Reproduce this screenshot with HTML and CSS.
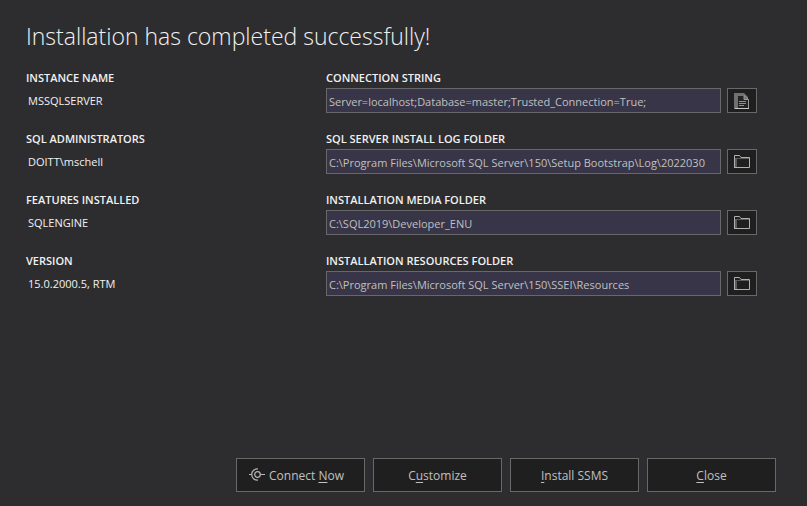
FILE: index.html
```html
<!DOCTYPE html>
<html lang="en">
<head>
<meta charset="utf-8">
<title>Installation complete</title>
<link rel="stylesheet" href="styles.css">
</head>
<body>
<svg class="symbols" aria-hidden="true">
  <symbol id="folder" viewBox="0 0 16 14">
    <path d="M1 3h15v1H3v8H1z" fill="#5c5c5c"/>
    <path d="M0.500 13V0.500H5.500L7 2.500H15.500V12.500H0.500" fill="none" stroke="#b0b0b0"/>
  </symbol>
</svg>
<main class="page">
  <h1 class="title">Installation has completed successfully!</h1>
  <div class="details">
    <dl class="facts">
      <div class="row"><dt class="label">INSTANCE NAME</dt><dd class="value">MSSQLSERVER</dd></div>
      <div class="row"><dt class="label">SQL ADMINISTRATORS</dt><dd class="value">DOITT\mschell</dd></div>
      <div class="row"><dt class="label">FEATURES INSTALLED</dt><dd class="value">SQLENGINE</dd></div>
      <div class="row"><dt class="label">VERSION</dt><dd class="value">15.0.2000.5, RTM</dd></div>
    </dl>
    <div class="paths">
      <div class="row">
        <label class="label" for="conn">CONNECTION STRING</label>
        <div class="field">
          <input class="box" id="conn" type="text" readonly value="Server=localhost;Database=master;Trusted_Connection=True;">
          <button class="icon-button" type="button" aria-label="Copy">
            <svg class="icon page-icon" viewBox="0 0 16 18">
              <path d="M0 1H10V4H5V17H0z" fill="#707070"/>
              <path d="M10 1l4 4v3h-5V4H5V1z" fill="#707070"/>
              <path d="M4 4h6v4h4v9H4z" fill="#242424"/>
              <path d="M10 3.500v4h4.500v9M10 3.500l4.500 4" fill="none" stroke="#9a9a9a"/>
              <path d="M5 9.500h7M5 11.500h7M5 13.500h5" stroke="#909090"/>
              <path d="M1 16.500h14" stroke="#c8c8c8"/>
            </svg>
          </button>
        </div>
      </div>
      <div class="row">
        <label class="label" for="log">SQL SERVER INSTALL LOG FOLDER</label>
        <div class="field">
          <input class="box" id="log" type="text" readonly value="C:\Program Files\Microsoft SQL Server\150\Setup Bootstrap\Log\2022030">
          <button class="icon-button" type="button" aria-label="Open folder"><svg class="icon"><use href="#folder"/></svg></button>
        </div>
      </div>
      <div class="row">
        <label class="label" for="media">INSTALLATION MEDIA FOLDER</label>
        <div class="field">
          <input class="box" id="media" type="text" readonly value="C:\SQL2019\Developer_ENU">
          <button class="icon-button" type="button" aria-label="Open folder"><svg class="icon"><use href="#folder"/></svg></button>
        </div>
      </div>
      <div class="row">
        <label class="label" for="res">INSTALLATION RESOURCES FOLDER</label>
        <div class="field">
          <input class="box" id="res" type="text" readonly value="C:\Program Files\Microsoft SQL Server\150\SSEI\Resources">
          <button class="icon-button" type="button" aria-label="Open folder"><svg class="icon"><use href="#folder"/></svg></button>
        </div>
      </div>
    </div>
  </div>
  <footer class="actions">
    <button class="action with-icon" type="button">
      <svg class="connect" viewBox="0 0 16 14">
        <g fill="none" stroke="#b8b8b8">
          <circle cx="8.500" cy="6.500" r="2.800" stroke-width="1.200"/>
          <path d="M9 1A5.550 5.550 0 1 0 9 12" stroke-width="1.200"/>
          <path d="M0 6.500h3M11.500 6.500h4.500"/>
        </g>
      </svg>
      <span>Connect <u>N</u>ow</span>
    </button>
    <button class="action" type="button"><span>C<u>u</u>stomize</span></button>
    <button class="action" type="button"><span><u>I</u>nstall SSMS</span></button>
    <button class="action" type="button"><span><u>C</u>lose</span></button>
  </footer>
</main>
</body>
</html>
```
FILE: styles.css
```css
* { box-sizing: border-box; }

body {
  margin: 0;
  background: #2d2d30;
  color: #f1f1f1;
  font-family: "Open Sans", "Noto Sans", sans-serif;
  font-size: 12px;
}

.symbols { position: absolute; width: 0; height: 0; }

.page {
  display: flex;
  flex-direction: column;
  min-height: 100vh;
  padding: 20px 31px 14px 26px;
}

.title {
  margin: 0 0 18px;
  font-size: 23px;
  font-weight: 300;
  line-height: 32px;
}

.details {
  display: grid;
  grid-template-columns: 300px minmax(0, 1fr);
  padding-right: 19px;
}

.facts { margin: 0; }

.row {
  display: flex;
  flex-direction: column;
  gap: 2px;
  padding-bottom: 18px;
}

.label {
  font-size: 11px;
  font-weight: 600;
  line-height: 16px;
}

.value {
  margin: 0;
  padding-left: 2px;
  font-size: 11px;
  line-height: 25px;
}

.field { display: flex; gap: 6px; }

.box {
  flex: 1;
  min-width: 0;
  height: 25px;
  padding: 2px 0 0 2px;
  border: 1px solid #686868;
  border-radius: 0;
  background: #373547;
  color: #c0c0c0;
  font-family: inherit;
  font-size: 11px;
  outline: none;
}

.icon-button,
.action {
  display: flex;
  align-items: center;
  justify-content: center;
  border: 1px solid #686868;
  background: #1f1f1f;
  color: #c0c0c0;
  font: inherit;
}

.icon-button { width: 30px; height: 25px; padding: 0; }

.icon { width: 16px; height: 14px; }

.page-icon { height: 18px; }

.actions {
  display: flex;
  justify-content: flex-end;
  gap: 8px;
  margin-top: auto;
}

.action { width: 129px; height: 34px; padding: 0 12px; gap: 4px; }

.with-icon { justify-content: flex-start; }

.connect { width: 16px; height: 14px; }

u { text-underline-offset: 2px; }
```
